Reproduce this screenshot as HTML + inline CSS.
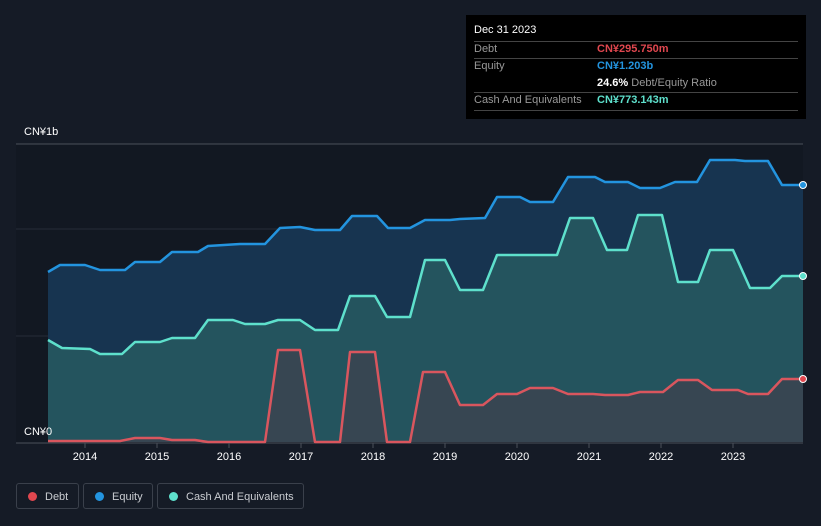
<!DOCTYPE html>
<html><head><meta charset="utf-8"><style>
html,body{margin:0;padding:0;background:#151b26;width:821px;height:526px;overflow:hidden;font-family:"Liberation Sans",sans-serif;}
svg{position:absolute;left:0;top:0}
.tip{position:absolute;left:466px;top:15px;width:340px;height:104px;background:#000;color:#fff;font-size:11px}
.tip .r{position:absolute;left:8px;right:8px;border-bottom:1px solid #444}
.lg{position:absolute;top:483px;height:26px;border:1px solid #3a404b;border-radius:3px;color:#c9ccd1;font-size:11px;line-height:26px;box-sizing:border-box}
.lg i{position:absolute;left:11px;top:8px;width:9px;height:9px;border-radius:50%}
</style></head><body>
<svg width="821" height="526">
<rect x="16" y="144" width="787" height="299" fill="#121822"/>
<line x1="16" y1="144" x2="803" y2="144" stroke="#4a505a" stroke-width="1"/>
<line x1="16" y1="229" x2="803" y2="229" stroke="#252c38" stroke-width="1"/>
<line x1="16" y1="336" x2="803" y2="336" stroke="#252c38" stroke-width="1"/>
<line x1="16" y1="443" x2="803" y2="443" stroke="#4a505a" stroke-width="1"/>
<path d="M48,272 L60,265 L85,265 L100,270 L125,270 L135,262 L160,262 L172,252 L198,252 L208,246 L240,244 L265,244 L280,228 L300,227 L315,230 L340,230 L352,216 L377,216 L388,228 L410,228 L425,220 L450,220 L460,219 L485,218 L497,197 L520,197 L530,202 L553,202 L568,177 L595,177 L605,182 L628,182 L640,188 L660,188 L675,182 L697,182 L710,160 L735,160 L745,161 L768,161 L782,185 L803,185 L803,442 L48,442Z" fill="#173450"/>
<path d="M48,340 L62,348 L90,349 L100,354 L122,354 L135,342 L160,342 L172,338 L195,338 L208,320 L233,320 L245,324 L265,324 L278,320 L300,320 L315,330 L338,330 L350,296 L375,296 L387,317 L410,317 L425,260 L445,260 L460,290 L483,290 L497,255 L557,255 L570,218 L593,218 L607,250 L627,250 L638,215 L662,215 L678,282 L698,282 L710,250 L733,250 L750,288 L770,288 L782,276 L803,276 L803,442 L48,442Z" fill="#24545e"/>
<path d="M48,441 L120,441 L135,438 L160,438 L172,440 L195,440 L208,442 L265,442 L278,350 L300,350 L315,442 L340,442 L350,352 L375,352 L387,442 L410,442 L423,372 L445,372 L460,405 L483,405 L497,394 L517,394 L530,388 L553,388 L568,394 L593,394 L605,395 L628,395 L640,392 L663,392 L678,380 L698,380 L712,390 L738,390 L748,394 L768,394 L782,379 L803,379 L803,442 L48,442Z" fill="#3b4450" opacity="0.85"/>
<path d="M48,272 L60,265 L85,265 L100,270 L125,270 L135,262 L160,262 L172,252 L198,252 L208,246 L240,244 L265,244 L280,228 L300,227 L315,230 L340,230 L352,216 L377,216 L388,228 L410,228 L425,220 L450,220 L460,219 L485,218 L497,197 L520,197 L530,202 L553,202 L568,177 L595,177 L605,182 L628,182 L640,188 L660,188 L675,182 L697,182 L710,160 L735,160 L745,161 L768,161 L782,185 L803,185" fill="none" stroke="#2394df" stroke-width="2.5" stroke-linejoin="round"/>
<path d="M48,340 L62,348 L90,349 L100,354 L122,354 L135,342 L160,342 L172,338 L195,338 L208,320 L233,320 L245,324 L265,324 L278,320 L300,320 L315,330 L338,330 L350,296 L375,296 L387,317 L410,317 L425,260 L445,260 L460,290 L483,290 L497,255 L557,255 L570,218 L593,218 L607,250 L627,250 L638,215 L662,215 L678,282 L698,282 L710,250 L733,250 L750,288 L770,288 L782,276 L803,276" fill="none" stroke="#5ee0cc" stroke-width="2.5" stroke-linejoin="round"/>
<path d="M48,441 L120,441 L135,438 L160,438 L172,440 L195,440 L208,442 L265,442 L278,350 L300,350 L315,442 L340,442 L350,352 L375,352 L387,442 L410,442 L423,372 L445,372 L460,405 L483,405 L497,394 L517,394 L530,388 L553,388 L568,394 L593,394 L605,395 L628,395 L640,392 L663,392 L678,380 L698,380 L712,390 L738,390 L748,394 L768,394 L782,379 L803,379" fill="none" stroke="#d9565e" stroke-width="2.5" stroke-linejoin="round"/>
<circle cx="803" cy="185" r="3.5" fill="#2394df" stroke="#fff" stroke-width="1"/>
<circle cx="803" cy="276" r="3.5" fill="#5ee0cc" stroke="#fff" stroke-width="1"/>
<circle cx="803" cy="379" r="3.5" fill="#e0474f" stroke="#fff" stroke-width="1"/>
<g stroke="#4a505a"><line x1="85" y1="443" x2="85" y2="448"/><line x1="157" y1="443" x2="157" y2="448"/><line x1="229" y1="443" x2="229" y2="448"/><line x1="301" y1="443" x2="301" y2="448"/><line x1="373" y1="443" x2="373" y2="448"/><line x1="445" y1="443" x2="445" y2="448"/><line x1="517" y1="443" x2="517" y2="448"/><line x1="589" y1="443" x2="589" y2="448"/><line x1="661" y1="443" x2="661" y2="448"/><line x1="733" y1="443" x2="733" y2="448"/></g>
<g fill="#fff" font-size="11" font-family="Liberation Sans,sans-serif" text-anchor="middle">
<text x="85" y="460">2014</text><text x="157" y="460">2015</text><text x="229" y="460">2016</text><text x="301" y="460">2017</text><text x="373" y="460">2018</text><text x="445" y="460">2019</text><text x="517" y="460">2020</text><text x="589" y="460">2021</text><text x="661" y="460">2022</text><text x="733" y="460">2023</text>
</g>
<text x="24" y="135" fill="#fff" font-size="11" font-family="Liberation Sans,sans-serif">CN¥1b</text>
<text x="24" y="435" fill="#fff" font-size="11" font-family="Liberation Sans,sans-serif">CN¥0</text>
</svg>
<div class="tip">
<div style="position:absolute;left:8px;top:9px;font-size:11px">Dec 31 2023</div>
<div class="r" style="top:26px"></div>
<div style="position:absolute;left:8px;top:28px;color:#999">Debt</div><div style="position:absolute;left:131px;top:28px;color:#e0474f;font-weight:bold">CN¥295.750m</div>
<div class="r" style="top:43px"></div>
<div style="position:absolute;left:8px;top:45px;color:#999">Equity</div><div style="position:absolute;left:131px;top:45px;color:#2394df;font-weight:bold">CN¥1.203b</div>
<div style="position:absolute;left:131px;top:62px;color:#999"><b style="color:#fff">24.6%</b> Debt/Equity Ratio</div>
<div class="r" style="top:77px"></div>
<div style="position:absolute;left:8px;top:79px;color:#999">Cash And Equivalents</div><div style="position:absolute;left:131px;top:79px;color:#5ee0cc;font-weight:bold">CN¥773.143m</div>
<div class="r" style="top:95px"></div>
</div>
<div class="lg" style="left:16px;width:63px"><i style="background:#e0474f"></i><span style="position:absolute;left:28px">Debt</span></div>
<div class="lg" style="left:83px;width:70px"><i style="background:#2394df"></i><span style="position:absolute;left:28px">Equity</span></div>
<div class="lg" style="left:157px;width:147px"><i style="background:#5ee0cc"></i><span style="position:absolute;left:28px">Cash And Equivalents</span></div>
</body></html>
